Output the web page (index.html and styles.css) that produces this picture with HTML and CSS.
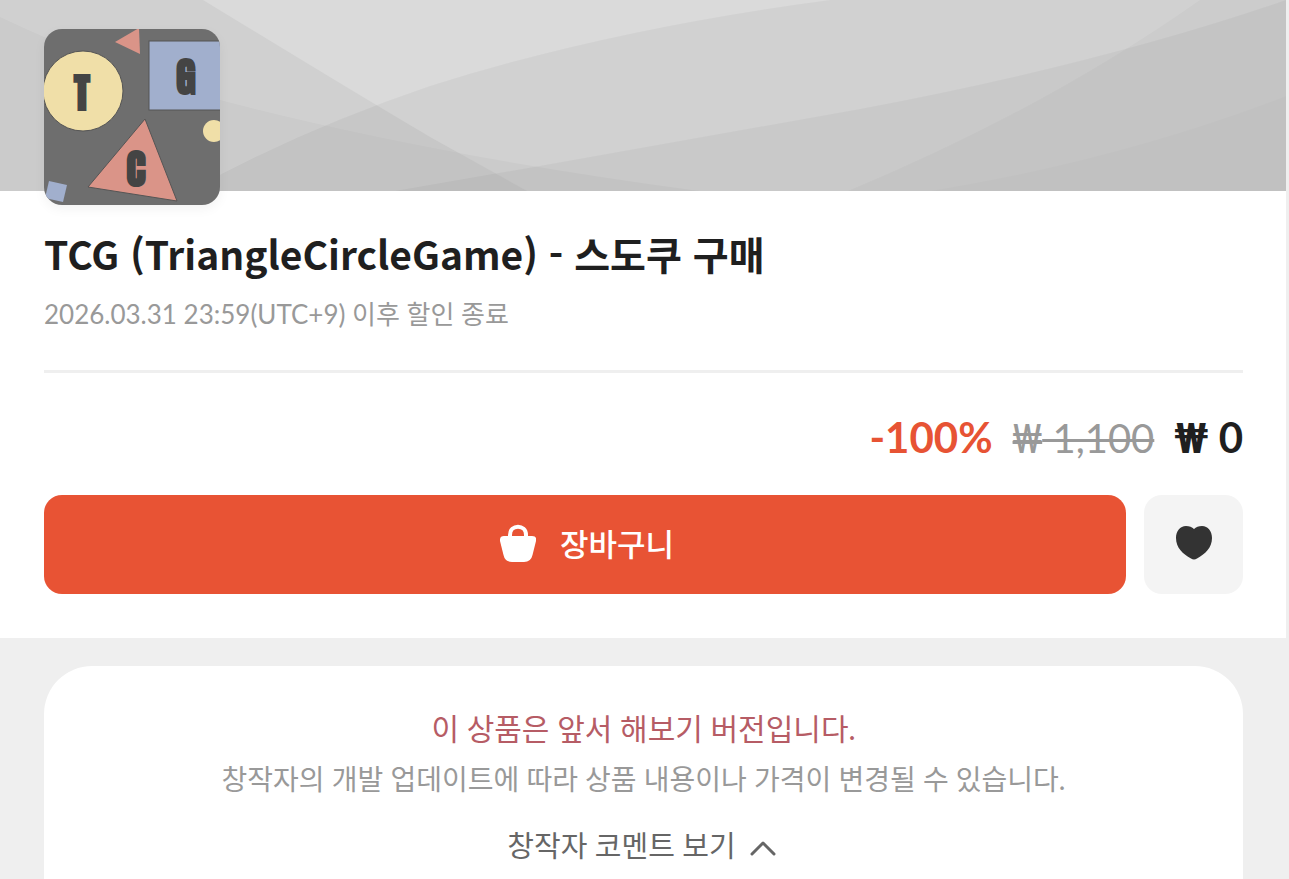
FILE: index.html
```html
<!DOCTYPE html>
<html lang="ko">
<head>
  <meta charset="UTF-8">
  <meta name="viewport" content="width=device-width, initial-scale=1">
  <title>TCG (TriangleCircleGame) - 스도쿠 구매</title>
  <link rel="stylesheet" href="styles.css">
</head>
<body>
  <main class="page">
    <section class="product">
      <div class="banner">
        <svg viewBox="0 0 1286 191" preserveAspectRatio="none" aria-hidden="true">
          <path fill="#fff" fill-opacity=".21" d="M203 0 Q365 99 430 137 L527 191 H1286 V0Z"/>
          <path fill-opacity=".022" d="M0 17 Q110 69 220 100 Q430 155 700 191 H0Z"/>
          <path fill-opacity=".038" d="M190 191 Q300 130 430 86 Q610 29 830 0 H1286 V191Z"/>
          <path fill-opacity=".036" d="M395 191 L545 165 L860 109 Q1100 64 1286 0 V191Z"/>
          <path fill-opacity=".022" d="M848 191 Q1045 109 1200 0 H1286 V191Z"/>
          <path fill-opacity=".012" d="M930 191 Q1120 160 1286 96 V191Z"/>
        </svg>
      </div>

      <div class="info">
        <svg class="app-icon" viewBox="0 0 176 176" role="img" aria-label="TCG">
          <rect width="176" height="176" fill="#6e6e6e"/>
          <g stroke="#555" stroke-width="1">
            <circle cx="39" cy="62" r="40" fill="#f0dfa8"/>
            <rect x="105" y="12" width="80" height="69" fill="#a1afcd"/>
            <path fill="#da9488" d="M101 90 L133 172 L44 158Z"/>
          </g>
          <path fill="#da9488" d="M71 13 L95 -1 L96 25Z"/>
          <circle cx="170" cy="102" r="11" fill="#f0dfa8"/>
          <path fill="#a1afcd" d="M5 152 L23 156 L19 173 L1 169Z"/>
          <g class="icon-letters">
            <text x="38" y="81">T</text>
            <text x="142" y="65">G</text>
            <text x="92" y="157">C</text>
          </g>
        </svg>

        <h1>TCG (TriangleCircleGame) - 스도쿠 구매</h1>
        <p class="period">2026.03.31 23:59(UTC+9) 이후 할인 종료</p>

        <div class="price">
          <strong class="rate">-100%</strong>
          <del><span class="won">₩</span> 1,100</del>
          <strong><span class="won">₩</span> 0</strong>
        </div>

        <div class="buttons">
          <button type="button" class="cart">
            <svg width="36" height="38" viewBox="0 0 36 38" aria-hidden="true">
              <path fill="none" stroke="#fff" stroke-width="4" d="M10 14 V11 C10 0 26 0 26 11 V14"/>
              <path fill="#fff" d="M4 12 H32 Q37 12 36 17 L32.500 31 Q31 38 24 38 H12 Q5 38 3.500 31 L0 17 Q-.5 12 4 12Z"/>
            </svg>
            장바구니
          </button>
          <button type="button" class="wish" aria-label="위시리스트">
            <svg width="36" height="34" viewBox="0 0 36 34" aria-hidden="true">
              <path fill="#333" d="M18 3 Q21 0 26 0 C32 0 36 5 36 12 C36 22 29 28 21 32.500 Q18 34.500 15 32.500 C7 28 0 22 0 12 C0 5 4 0 10 0 Q15 0 18 3Z"/>
            </svg>
          </button>
        </div>
      </div>
    </section>

    <section class="notice">
      <p class="early">이 상품은 앞서 해보기 버전입니다.</p>
      <p class="desc">창작자의 개발 업데이트에 따라 상품 내용이나 가격이 변경될 수 있습니다.</p>
      <button type="button" class="comment">
        창작자 코멘트 보기
        <svg width="26" height="20" viewBox="0 0 26 20" aria-hidden="true">
          <path fill="none" stroke="#666" stroke-width="3" stroke-linecap="round" stroke-linejoin="round" d="M2 18 L13 7 L24 18"/>
        </svg>
      </button>
    </section>
  </main>
</body>
</html>
```

FILE: styles.css
```css
* {
  box-sizing: border-box;
}

body {
  margin: 0;
  background: #efefef;
  color: #1f1f1f;
  font-family: Lato, "Noto Sans CJK KR", sans-serif;
}

h1, p {
  margin: 0;
}

button {
  border: none;
  padding: 0;
  font-family: inherit;
  cursor: pointer;
}

.page {
  display: flex;
  flex-direction: column;
  min-height: 100vh;
  margin-right: 3px;
}

.product {
  background: #fff;
}

.banner {
  height: 191px;
  background: #d0d0d0;
}

.banner svg {
  display: block;
  width: 100%;
  height: 100%;
}

.info {
  padding: 0 43px 44px 44px;
}

.app-icon {
  display: block;
  position: relative;
  width: 176px;
  height: 176px;
  margin-top: -162px;
  border-radius: 18px;
  box-shadow: 0 4px 12px rgba(0, 0, 0, 0.05);
}

.icon-letters {
  font-family: Impact, Anton, "Noto Sans CJK KR", sans-serif;
  font-size: 40px;
  text-anchor: middle;
  fill: #444;
  stroke: #444;
  stroke-width: 2px;
}

h1 {
  margin-top: 18px;
  font-family: "Noto Sans CJK KR", sans-serif;
  font-size: 39px;
  font-weight: 700;
  line-height: 60px;
}

.period {
  margin-top: 11px;
  padding-bottom: 36px;
  border-bottom: 3px solid #efefef;
  color: #999;
  font-size: 26px;
  line-height: 40px;
}

.price {
  display: flex;
  align-items: baseline;
  justify-content: flex-end;
  gap: 20px;
  margin-top: 34px;
  font-size: 42px;
  line-height: 60px;
}

.price del {
  color: #999;
  font-size: 40px;
  text-decoration-thickness: 3px;
}

.price .rate {
  color: #e75334;
}

.won {
  font-family: Roboto, sans-serif;
  line-height: 1;
}

.buttons {
  display: flex;
  gap: 18px;
  margin-top: 27px;
}

.cart,
.wish {
  display: flex;
  align-items: center;
  justify-content: center;
  height: 99px;
  padding-bottom: 4px;
  border-radius: 18px;
}

.cart {
  flex: 1;
  gap: 24px;
  padding-left: 4px;
  background: #e85334;
  color: #fff;
  font-size: 31px;
  font-weight: 500;
}

.wish {
  width: 99px;
  background: #f4f4f4;
}

.notice {
  display: flex;
  flex: 1;
  flex-direction: column;
  align-items: center;
  margin: 28px 43px 0 44px;
  padding: 37px 20px 8px;
  border-radius: 48px 48px 0 0;
  background: #fff;
  text-align: center;
}

.early {
  color: #b65c65;
  font-size: 30px;
  line-height: 50px;
}

.desc {
  color: #999;
  font-size: 28px;
  line-height: 52px;
}

.comment {
  display: flex;
  align-items: center;
  gap: 14px;
  margin-top: 16px;
  padding-right: 4px;
  background: none;
  color: #666;
  font-size: 29px;
  line-height: 50px;
}
```
